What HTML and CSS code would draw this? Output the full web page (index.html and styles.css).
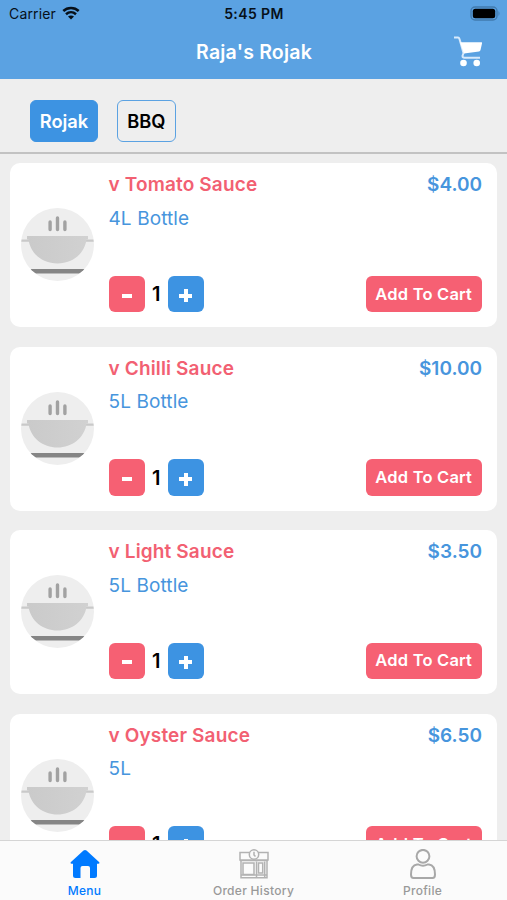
FILE: index.html
```html
<!DOCTYPE html>
<html lang="en">
<head>
<meta charset="utf-8">
<title>Raja's Rojak</title>
<link rel="stylesheet" href="styles.css">
</head>
<body>
<svg class="defs" aria-hidden="true">
  <defs>
    <clipPath id="disc"><circle cx="36.5" cy="36.5" r="36.5"/></clipPath>
    <linearGradient id="bowl-fill"><stop offset="0" stop-color="#cacaca"/><stop offset="1" stop-color="#d1d1d1"/></linearGradient>
    <symbol id="bowl" viewBox="0 0 73 73">
      <g clip-path="url(#disc)">
        <rect width="73" height="73" fill="#eeeeee"/>
        <path d="M0 32.6H73" stroke="#c9c9c9" stroke-width="2.4"/>
        <path d="M6 28H67V31.5H65.500C63.500 46 51 55.500 36.500 55.500S9.500 46 7.500 31.500H6Z" fill="url(#bowl-fill)"/>
        <path d="M29.100 14V21.500M36.500 10V21.500M43.900 14V21.500" stroke="#a2a2a2" stroke-width="3.400" stroke-linecap="round"/>
        <path d="M9 61H64L61 65.500H12Z" fill="#858585"/>
      </g>
    </symbol>
  </defs>
</svg>
<div class="app">
  <header class="top">
    <div class="status">
      <div class="carrier"><span>Carrier</span>
        <svg width="18" height="14" viewBox="0 0 18 14"><path d="M1.300 5C5.500.9 12.500.9 16.700 5M4 8.200C7 5.500 11 5.500 14 8.200" fill="none" stroke="#071019" stroke-width="2.500"/><path d="M6 10.500C7.800 9 10.200 9 12 10.500L9 13.600Z" fill="#071019"/></svg>
      </div>
      <span class="clock">5:45 PM</span>
      <svg class="battery" width="31" height="15" viewBox="0 0 31 15"><rect x="1" y="1" width="26" height="13" rx="4" fill="none" stroke="#427bae" stroke-width="1.400"/><rect x="2.800" y="2.800" width="22.400" height="9.400" rx="2.500" fill="#000"/><path d="M28.500 5Q30.500 7.500 28.500 10Z" fill="#427bae"/></svg>
    </div>
    <div class="nav">
      <h1>Raja's Rojak</h1>
      <svg class="cart" width="30" height="32" viewBox="0 0 30 32"><path d="M1 1.500H5Q6 1.500 6.500 3L10.500 17L9.500 20Q9.500 21.700 11.500 21.700H27" fill="none" stroke="#d8eafc" stroke-width="2"/><path d="M7 6.300H28.500Q29.300 6.300 29 7.500L27.500 14Q27.200 15.200 26 15.400L11 17.500Z" fill="#fff"/><circle cx="10.500" cy="27" r="3.300" fill="#fff"/><circle cx="23.700" cy="27" r="3.300" fill="#fff"/></svg>
    </div>
  </header>
  <div class="filters">
    <button class="filter active">Rojak</button>
    <button class="filter">BBQ</button>
  </div>
  <main class="list">
    <article class="card">
      <svg class="thumb"><use href="#bowl"/></svg>
      <div class="body">
        <div class="row"><h2>v Tomato Sauce</h2><span class="price">$4.00</span></div>
        <p>4L Bottle</p>
        <div class="row actions"><div class="stepper"><button class="step minus" aria-label="Remove"></button><span>1</span><button class="step plus" aria-label="Add"></button></div><button class="add">Add To Cart</button></div>
      </div>
    </article>
    <article class="card">
      <svg class="thumb"><use href="#bowl"/></svg>
      <div class="body">
        <div class="row"><h2>v Chilli Sauce</h2><span class="price">$10.00</span></div>
        <p>5L Bottle</p>
        <div class="row actions"><div class="stepper"><button class="step minus" aria-label="Remove"></button><span>1</span><button class="step plus" aria-label="Add"></button></div><button class="add">Add To Cart</button></div>
      </div>
    </article>
    <article class="card">
      <svg class="thumb"><use href="#bowl"/></svg>
      <div class="body">
        <div class="row"><h2>v Light Sauce</h2><span class="price">$3.50</span></div>
        <p>5L Bottle</p>
        <div class="row actions"><div class="stepper"><button class="step minus" aria-label="Remove"></button><span>1</span><button class="step plus" aria-label="Add"></button></div><button class="add">Add To Cart</button></div>
      </div>
    </article>
    <article class="card">
      <svg class="thumb"><use href="#bowl"/></svg>
      <div class="body">
        <div class="row"><h2>v Oyster Sauce</h2><span class="price">$6.50</span></div>
        <p>5L</p>
        <div class="row actions"><div class="stepper"><button class="step minus" aria-label="Remove"></button><span>1</span><button class="step plus" aria-label="Add"></button></div><button class="add">Add To Cart</button></div>
      </div>
    </article>
  </main>
  <nav class="tabs">
    <a class="tab current">
      <svg width="32" height="30" viewBox="0 0 32 30"><path d="M14.500 1.600Q16 .4 17.500 1.600L30.300 13.200Q31 14.600 29.500 14.800H28V26.500Q28 29 25.500 29H21V19Q21 17 19 17H13.500Q11.500 17 11.500 19V29H6.500Q4 29 4 26.500V14.800H2.500Q1 14.600 1.700 13.200Z" fill="#007aff"/></svg>
      <span>Menu</span>
    </a>
    <a class="tab">
      <svg width="32" height="30" viewBox="0 0 32 30" fill="none" stroke="#b2b2b2" stroke-width="1.500"><path d="M2 3.500H30V11H2ZM3 11V28.700H29V11M3 26H29M2 11.500H30"/><rect x="5" y="14" width="11" height="11.500"/><path d="M18.500 12.500V28M26.700 12.500V28M20.500 14H24.700V24H20.500Z"/><circle cx="16" cy="5.500" r="4.700" fill="#fbfbfb"/><path d="M16 2.800V6L17.500 7.500"/></svg>
      <span>Order History</span>
    </a>
    <a class="tab">
      <svg width="32" height="30" viewBox="0 0 32 30" fill="none" stroke="#a8a8a8" stroke-width="2"><circle cx="16" cy="7.300" r="6.400"/><path d="M10 15.500H11.500Q16 18 20.500 15.500H22C26 16 28 20 28 25.500Q28 29 25.500 29H6.500Q4 29 4 25.500C4 20 6 16 10 15.500Z"/></svg>
      <span>Profile</span>
    </a>
  </nav>
</div>
</body>
</html>
```
FILE: styles.css
```css
* { box-sizing: border-box; }
body { margin: 0; font-family: Inter, "Liberation Sans", sans-serif; background: #eee; }
h1, h2, p { margin: 0; }
button { border: 0; padding: 0; font: inherit; }
svg { display: block; flex-shrink: 0; }
.defs { position: absolute; width: 0; height: 0; }
.app { height: 900px; display: flex; flex-direction: column; overflow: hidden; }
.top { height: 79px; flex-shrink: 0; background: #5ba2e2; }
.status { height: 27px; padding: 0 5px 0 9px; display: grid; grid-template-columns: 1fr auto 1fr; align-items: center; color: #071019; font-size: 14px; }
.carrier { display: flex; align-items: center; gap: 6px; letter-spacing: .15px; }
.carrier svg { margin-top: -2px; }
.clock { font-weight: 600; font-size: 14px; letter-spacing: .4px; margin-right: 3px; }
.battery { justify-self: end; margin-right: 1px; }
.nav { height: 50px; padding: 0 24px 0 25px; display: grid; grid-template-columns: 1fr auto 1fr; align-items: center; color: #fff; }
.nav h1 { grid-column: 2; font-size: 19.5px; font-weight: 600; letter-spacing: .2px; }
.cart { justify-self: end; }
.filters { height: 75px; flex-shrink: 0; padding: 20.500px 30px 0; display: flex; gap: 19px; border-bottom: 2px solid #c2c2c2; }
.filter { height: 42px; width: 58.500px; border: 1.500px solid #5ba2e2; border-radius: 6px; background: transparent; color: #000; font-size: 18.300px; font-weight: 600; }
.filter.active { width: 68px; background: #3d93e2; border-color: #3d93e2; color: #fff; }
.list { flex: 1; min-height: 0; overflow: hidden; padding: 9.400px 10px 0; display: flex; flex-direction: column; gap: 19.400px; }
.card { height: 164px; flex-shrink: 0; border-radius: 10px; background: #fff; padding: 10px 15px 15px 11px; display: flex; align-items: center; gap: 14.500px; }
.thumb { width: 73px; height: 73px; margin-top: 4px; }
.body { flex: 1; height: 100%; display: flex; flex-direction: column; color: #4795dd; font-size: 19px; }
.row { display: flex; justify-content: space-between; align-items: center; }
.body h2, .price { font-size: 19px; line-height: 24px; font-weight: 600; }
.body h2 { color: #f26072; letter-spacing: .15px; }
.body p { line-height: 24px; margin-top: 9.500px; letter-spacing: .1px; }
.actions { margin-top: auto; }
.stepper { display: flex; align-items: center; color: #000; font-weight: 600; font-size: 20px; }
.stepper span { width: 22.500px; text-align: center; }
.step { width: 36.500px; height: 36.500px; border-radius: 6px; display: grid; place-items: center; }
.step::before, .step::after { content: ""; grid-area: 1 / 1; background: #fff; margin-top: 3px; }
.minus { background: #f66073; }
.minus::before { width: 10px; height: 4px; }
.plus { background: #3d93e2; }
.plus::before { width: 13px; height: 4px; }
.plus::after { width: 4px; height: 13px; }
.add { width: 116.500px; height: 36.500px; border-radius: 6px; background: #f66073; color: #fff; font-size: 16.500px; font-weight: 600; letter-spacing: .2px; padding-bottom: 1px; }
.tabs { height: 60px; flex-shrink: 0; display: grid; grid-template-columns: repeat(3, 1fr); background: #fbfbfb; border-top: 1px solid #d5d5d5; }
.tab { display: flex; flex-direction: column; align-items: center; padding-top: 8px; gap: 4px; font-size: 12px; font-weight: 500; line-height: 16px; letter-spacing: .3px; color: #999; }
.current { color: #007aff; }
```
